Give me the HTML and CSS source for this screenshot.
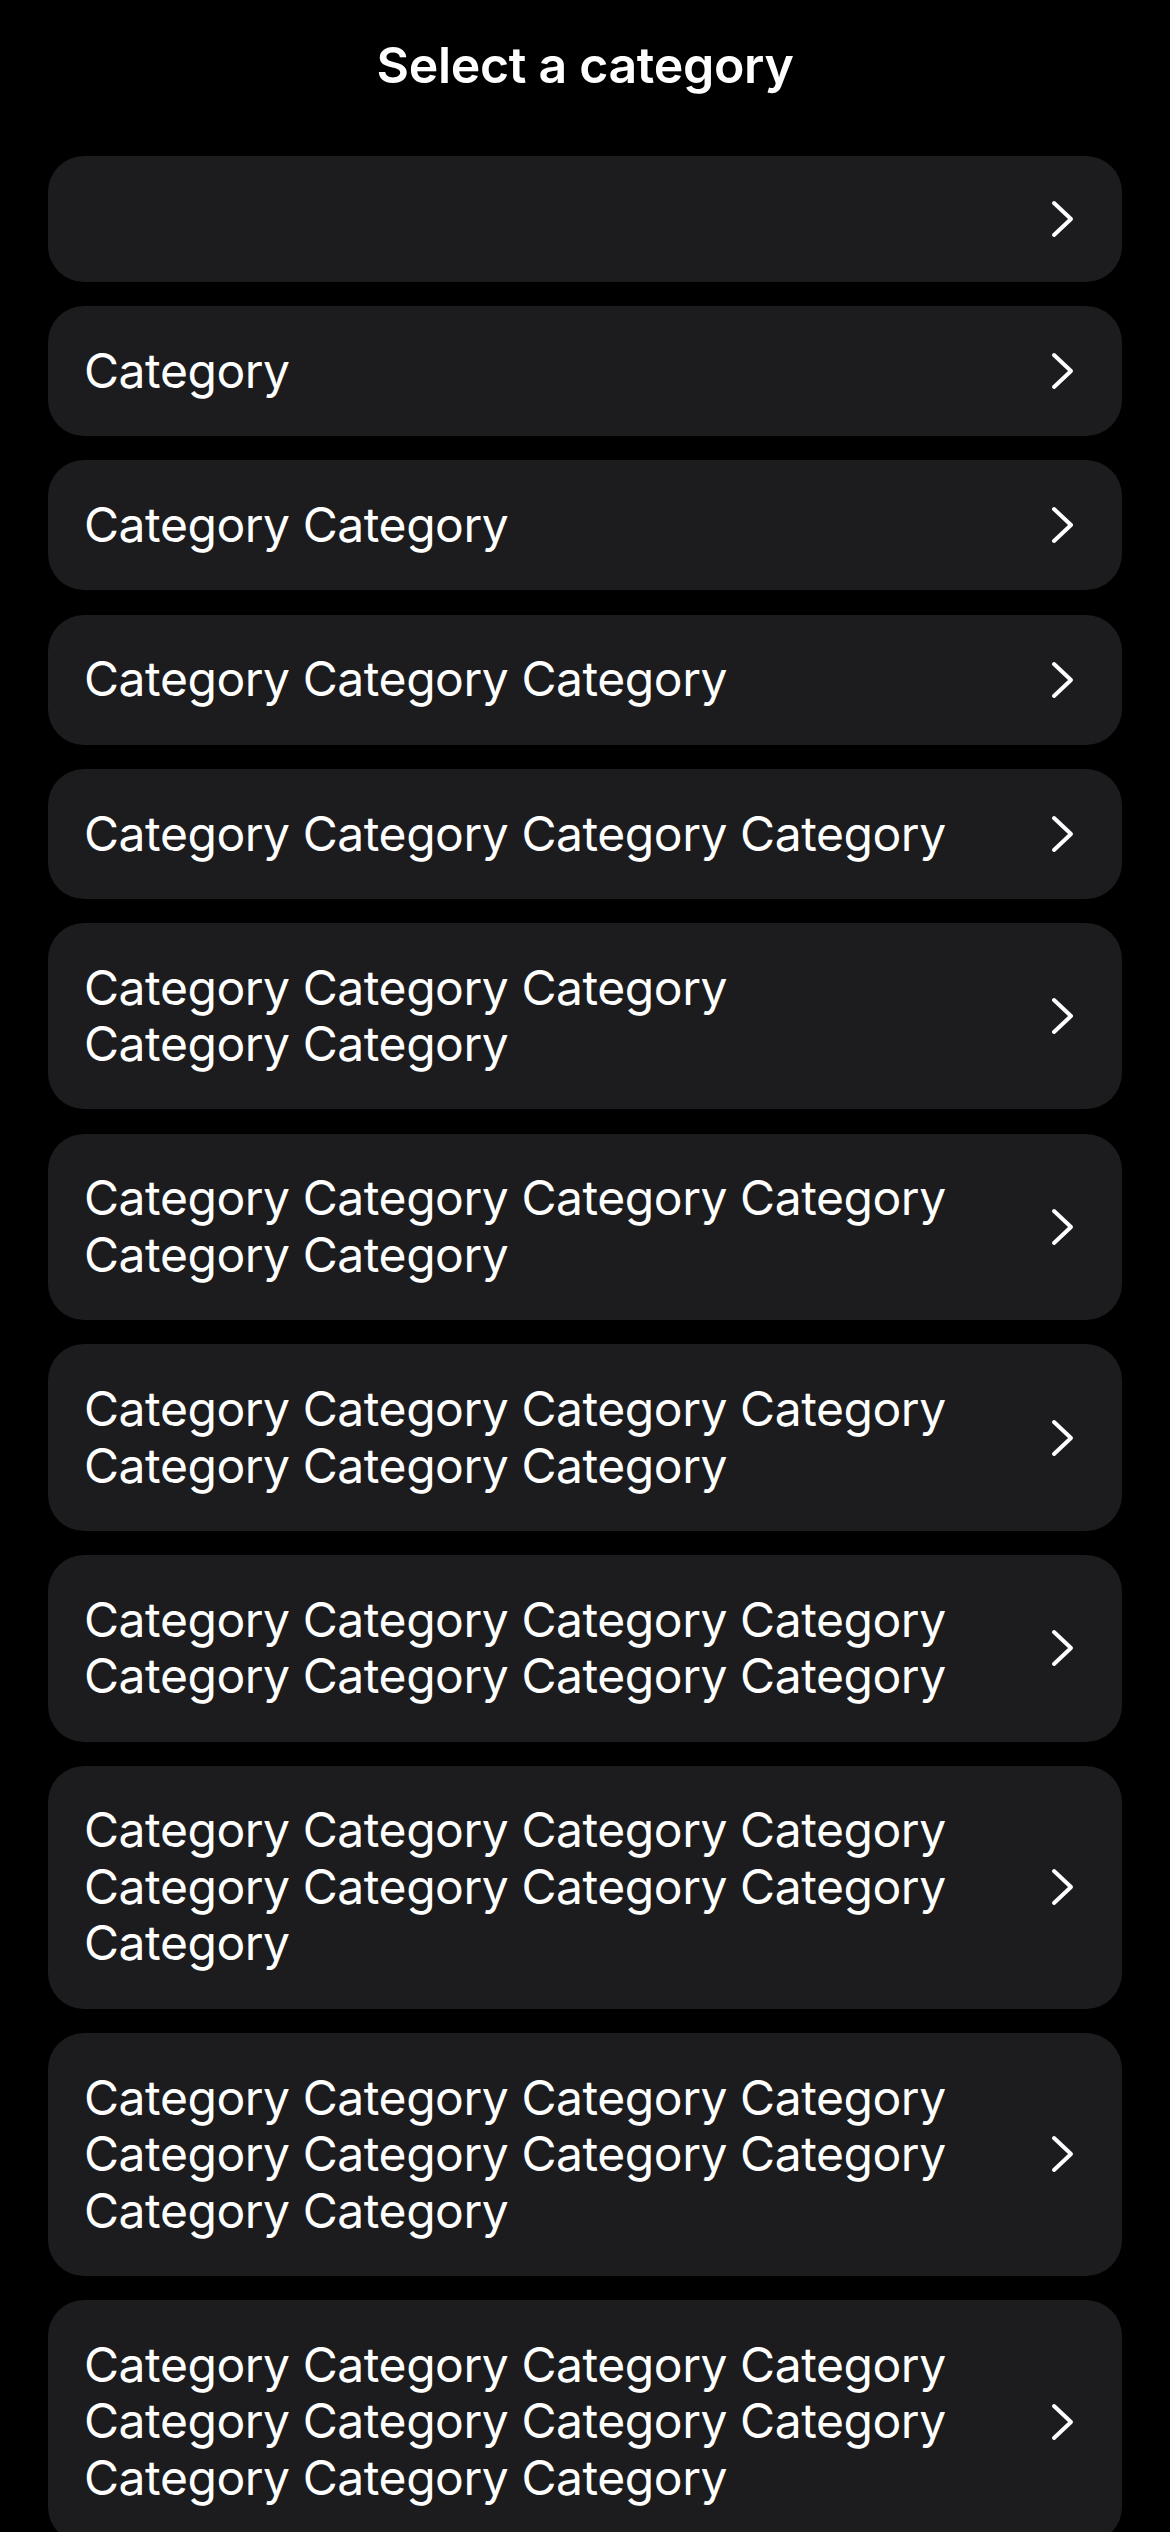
FILE: index.html
```html
<!DOCTYPE html>
<html>
<head>
<meta charset="utf-8">
<link rel="stylesheet" href="styles.css">
</head>
<body>
<div class="screen">
  <header class="header"><h1 class="title">Select a category</h1></header>
  <ul class="list">
    <li class="row"><span class="label empty"></span><svg class="chev" viewBox="0 0 25 40"><path d="M4 4 L21 20 L4 36"/></svg></li>
    <li class="row"><span class="label">Category</span><svg class="chev" viewBox="0 0 25 40"><path d="M4 4 L21 20 L4 36"/></svg></li>
    <li class="row"><span class="label">Category Category</span><svg class="chev" viewBox="0 0 25 40"><path d="M4 4 L21 20 L4 36"/></svg></li>
    <li class="row"><span class="label">Category Category Category</span><svg class="chev" viewBox="0 0 25 40"><path d="M4 4 L21 20 L4 36"/></svg></li>
    <li class="row"><span class="label">Category Category Category Category</span><svg class="chev" viewBox="0 0 25 40"><path d="M4 4 L21 20 L4 36"/></svg></li>
    <li class="row"><span class="label">Category Category Category<br>Category Category</span><svg class="chev" viewBox="0 0 25 40"><path d="M4 4 L21 20 L4 36"/></svg></li>
    <li class="row"><span class="label">Category Category Category Category Category Category</span><svg class="chev" viewBox="0 0 25 40"><path d="M4 4 L21 20 L4 36"/></svg></li>
    <li class="row"><span class="label">Category Category Category Category Category Category Category</span><svg class="chev" viewBox="0 0 25 40"><path d="M4 4 L21 20 L4 36"/></svg></li>
    <li class="row"><span class="label">Category Category Category Category Category Category Category Category</span><svg class="chev" viewBox="0 0 25 40"><path d="M4 4 L21 20 L4 36"/></svg></li>
    <li class="row"><span class="label">Category Category Category Category Category Category Category Category Category</span><svg class="chev" viewBox="0 0 25 40"><path d="M4 4 L21 20 L4 36"/></svg></li>
    <li class="row"><span class="label">Category Category Category Category Category Category Category Category Category Category</span><svg class="chev" viewBox="0 0 25 40"><path d="M4 4 L21 20 L4 36"/></svg></li>
    <li class="row"><span class="label">Category Category Category Category Category Category Category Category Category Category Category</span><svg class="chev" viewBox="0 0 25 40"><path d="M4 4 L21 20 L4 36"/></svg></li>
  </ul>
</div>
</body>
</html>
```
FILE: styles.css
```css
html, body {
  margin: 0;
  padding: 0;
  background: #000;
}
body {
  font-family: Inter, "Noto Sans", "Liberation Sans", sans-serif;
  color: #fff;
}
.screen {
  padding: 0 48px;
}
.header {
  padding: 35px 0 61px;
  text-align: center;
}
.title {
  margin: 0;
  font-size: 50px;
  line-height: 60px;
  font-weight: 600;
  letter-spacing: -0.3px;
}
.list {
  list-style: none;
  margin: 0;
  padding: 0;
  display: flex;
  flex-direction: column;
  gap: 24.2px;
}
.row {
  display: flex;
  align-items: center;
  gap: 40px;
  background: #1c1c1e;
  border-radius: 36px;
  padding: 36.75px 47px 36.75px 36px;
}
.label {
  flex: 1;
  font-size: 48px;
  line-height: 56.5px;
  letter-spacing: -0.45px;
}
.label.empty {
  height: 52.5px;
}
.chev {
  width: 25px;
  height: 40px;
  flex: none;
}
.chev path {
  fill: none;
  stroke: #fff;
  stroke-width: 4;
  stroke-linecap: round;
  stroke-linejoin: round;
}
```
